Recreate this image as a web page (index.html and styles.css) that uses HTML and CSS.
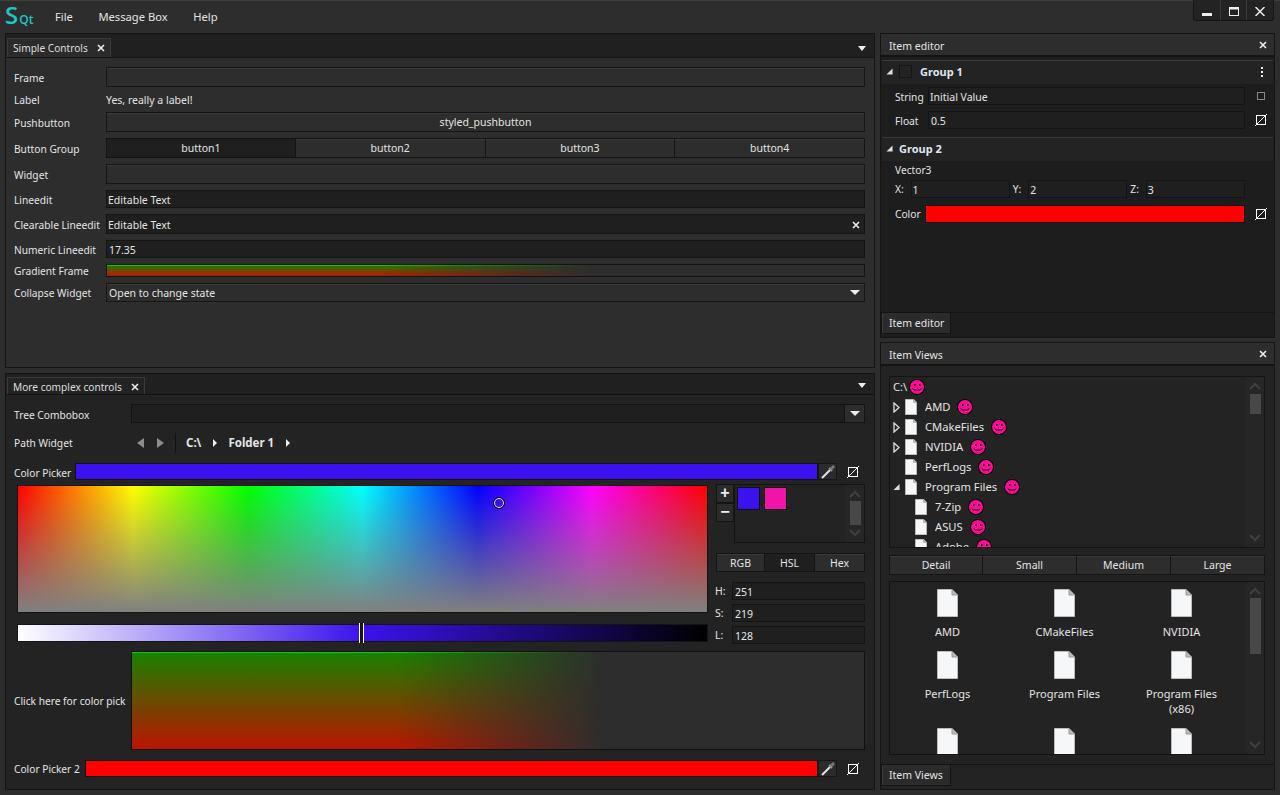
FILE: index.html
```html
<!DOCTYPE html>
<html lang="en">
<head>
<meta charset="utf-8">
<title>SQt</title>
<link rel="stylesheet" href="styles.css">
</head>
<body>
<svg class="defs" width="0" height="0" aria-hidden="true">
  <symbol id="file" viewBox="0 0 21 28"><path d="M0.5 0.5H15L20.5 6V27.5H0.5Z" fill="#f6f7f9" stroke="#bdbdbd"/><path d="M15 0.5V6H20.5" fill="#bbb" stroke="#999"/></symbol>
  <symbol id="smile" viewBox="0 0 16 16"><circle cx="8" cy="8" r="8" fill="#000"/><circle cx="8" cy="8" r="7" fill="#ff0a96"/><rect x="5" y="5" width="1.5" height="2" fill="#000"/><rect x="10" y="5" width="1.5" height="2" fill="#000"/><path d="M4 9.5 5 11H11L12 9.5" fill="none" stroke="#000"/></symbol>
  <symbol id="nocolor" viewBox="0 0 12 12"><rect x="1.5" y="1.5" width="9" height="9" fill="none" stroke="#fff"/><path d="M0 12 12 0" stroke="#fff"/></symbol>
  <symbol id="dropper" viewBox="0 0 16 16"><path d="M2 14 10 6" stroke="#e4e4e4" stroke-width="2"/><path d="M9 4 12 7" stroke="#999" stroke-width="2"/><path d="M11 5 14 2" stroke="#777" stroke-width="3"/></symbol>
  <symbol id="x" viewBox="0 0 8 8"><path d="M1 1 7 7M7 1 1 7" stroke="#eee" stroke-width="1.6"/></symbol>
  <symbol id="up" viewBox="0 0 12 8"><path d="M1 7 6 2 11 7" fill="none" stroke="#404040" stroke-width="2"/></symbol>
  <symbol id="down" viewBox="0 0 12 8"><path d="M1 1 6 6 11 1" fill="none" stroke="#404040" stroke-width="2"/></symbol>
  <symbol id="open" viewBox="0 0 8 8"><path d="M7.5 0.5V7.5H0.5Z" fill="#ddd"/></symbol>
  <symbol id="closed" viewBox="0 0 7 11"><path d="M1 1 6 5.5 1 10Z" fill="none" stroke="#ddd" stroke-width="1.3"/></symbol>
</svg>

<div class="app">
  <header class="titlebar">
    <div class="logo"><span class="logo-s">S</span><span class="logo-qt">Qt</span></div>
    <nav class="menu"><span>File</span><span>Message Box</span><span>Help</span></nav>
    <div class="winbtns">
      <div class="winbtn"><svg width="10" height="3" class="min"><rect width="10" height="3" fill="#eee"/></svg></div>
      <div class="winbtn"><svg width="10" height="9"><rect x="0.5" y="0.5" width="9" height="8" fill="none" stroke="#eee"/><rect width="10" height="2.5" fill="#eee"/></svg></div>
      <div class="winbtn"><svg width="10" height="9" viewBox="0 0 10 9"><path d="M0.5 0 9.5 9M9.5 0 0.5 9" stroke="#eee" stroke-width="1.5"/></svg></div>
    </div>
  </header>

  <main class="main">
    <div class="col-left">
      <section class="panel panel-simple">
        <div class="tabstrip">
          <div class="tab"><span>Simple Controls</span><svg class="tab-x"><use href="#x"/></svg></div>
          <div class="tabmenu"></div>
        </div>
        <div class="form">
          <label>Frame</label><div class="frame h20"></div>
          <label class="lab-flat">Label</label><div class="plain h13">Yes, really a label!</div>
          <label>Pushbutton</label><div class="frame h20 center">styled_pushbutton</div>
          <label class="lab-low">Button Group</label>
          <div class="btngroup h20"><div class="btn on">button1</div><div class="btn">button2</div><div class="btn">button3</div><div class="btn">button4</div></div>
          <label>Widget</label><div class="frame h20"></div>
          <label>Lineedit</label><div class="input h18">Editable Text</div>
          <label>Clearable Lineedit</label><div class="input h20 between"><span>Editable Text</span><svg class="clear"><use href="#x"/></svg></div>
          <label>Numeric Lineedit</label><div class="input h18 num">17.35</div>
          <label class="lab-flat">Gradient Frame</label><div class="gradframe h13"></div>
          <label class="lab-flat">Collapse Widget</label><div class="frame h19 combo"><span>Open to change state</span><i class="caret"></i></div>
        </div>
      </section>

      <section class="panel panel-complex">
        <div class="tabstrip tabstrip2">
          <div class="tab tab2"><span>More complex controls</span><svg class="tab-x"><use href="#x"/></svg></div>
          <div class="tabmenu"></div>
        </div>
        <div class="complex">
          <div class="row tree-row">
            <label class="w117">Tree Combobox</label>
            <div class="input grow h19 treecombo"><div class="combo-drop"><i class="caret"></i></div></div>
          </div>
          <div class="row path-row">
            <label class="w117 lab-flat">Path Widget</label>
            <div class="path">
              <i class="tri-left"></i><i class="tri-right grey"></i><i class="pathsep"></i>
              <b>C:\</b><i class="tri-right small"></i><b class="folder">Folder 1</b><i class="tri-right small"></i>
            </div>
          </div>
          <div class="row cp-row">
            <label class="cp-label">Color Picker</label>
            <div class="swatch blue grow"></div>
            <div class="dropper"><svg width="16" height="16"><use href="#dropper"/></svg></div>
            <svg class="nocolor"><use href="#nocolor"/></svg>
          </div>
          <div class="picker">
            <div class="picker-left">
              <div class="huebox"><i class="ring"></i></div>
              <div class="lumbar"><i class="handle"></i></div>
            </div>
            <div class="picker-right">
              <div class="palette-row">
                <div class="pm"><div class="pm-btn">+</div><div class="pm-btn">−</div></div>
                <div class="palette">
                  <div class="pal-swatch blue"></div>
                  <div class="pal-swatch pink"></div>
                  <div class="scroll"><svg class="sc-arrow"><use href="#up"/></svg><i class="thumb t-pal"></i><svg class="sc-arrow end"><use href="#down"/></svg></div>
                </div>
              </div>
              <div class="modes"><div class="btn">RGB</div><div class="btn on">HSL</div><div class="btn">Hex</div></div>
              <div class="hsl"><span>H:</span><div class="input h18">251</div></div>
              <div class="hsl"><span>S:</span><div class="input h18">219</div></div>
              <div class="hsl"><span>L:</span><div class="input h18">128</div></div>
            </div>
          </div>
          <div class="row big-row">
            <label class="w117 lab-flat">Click here for color pick</label>
            <div class="biggrad grow"></div>
          </div>
          <div class="row cp2-row">
            <label class="cp2-label lab-flat">Color Picker 2</label>
            <div class="swatch red grow"></div>
            <div class="dropper"><svg width="16" height="16"><use href="#dropper"/></svg></div>
            <svg class="nocolor"><use href="#nocolor"/></svg>
          </div>
        </div>
      </section>
    </div>

    <div class="col-right">
      <section class="panel panel-editor">
        <div class="dockhead"><span>Item editor</span><svg class="dock-x"><use href="#x"/></svg></div>
        <div class="editor">
          <div class="grouphead">
            <svg class="gtri"><use href="#open"/></svg><i class="check"></i><b>Group 1</b>
            <div class="dots"><i></i><i></i><i></i></div>
          </div>
          <div class="erow e-string"><label>String</label><div class="input grow h18">Initial Value</div><i class="sq"></i></div>
          <div class="erow e-float"><label>Float</label><div class="input grow h18 num-e">0.5</div><svg class="nocolor2"><use href="#nocolor"/></svg></div>
          <div class="grouphead g2">
            <svg class="gtri"><use href="#open"/></svg><b>Group 2</b>
          </div>
          <div class="vec-title">Vector3</div>
          <div class="erow vec">
            <label>X:</label><div class="input grow h18">1</div>
            <label>Y:</label><div class="input grow h18">2</div>
            <label>Z:</label><div class="input grow h18">3</div>
            <i class="spacer"></i>
          </div>
          <div class="erow e-color"><label class="lab-flat">Color</label><div class="swatch red grow h18"></div><svg class="nocolor2"><use href="#nocolor"/></svg></div>
        </div>
        <div class="btabs"><div class="btab">Item editor</div></div>
      </section>

      <section class="panel panel-views">
        <div class="dockhead"><span>Item Views</span><svg class="dock-x"><use href="#x"/></svg></div>
        <div class="views">
          <div class="tree">
            <div class="tree-list">
              <div class="node root">C:\<svg class="smile s-root"><use href="#smile"/></svg></div>
              <div class="node"><svg class="arrow"><use href="#closed"/></svg><svg class="fi"><use href="#file"/></svg>AMD<svg class="smile"><use href="#smile"/></svg></div>
              <div class="node"><svg class="arrow"><use href="#closed"/></svg><svg class="fi"><use href="#file"/></svg>CMakeFiles<svg class="smile"><use href="#smile"/></svg></div>
              <div class="node"><svg class="arrow"><use href="#closed"/></svg><svg class="fi"><use href="#file"/></svg>NVIDIA<svg class="smile"><use href="#smile"/></svg></div>
              <div class="node"><i class="arrow"></i><svg class="fi"><use href="#file"/></svg>PerfLogs<svg class="smile"><use href="#smile"/></svg></div>
              <div class="node"><svg class="arrow op"><use href="#open"/></svg><svg class="fi"><use href="#file"/></svg>Program Files<svg class="smile"><use href="#smile"/></svg></div>
              <div class="node child"><svg class="fi"><use href="#file"/></svg>7-Zip<svg class="smile"><use href="#smile"/></svg></div>
              <div class="node child"><svg class="fi"><use href="#file"/></svg>ASUS<svg class="smile"><use href="#smile"/></svg></div>
              <div class="node child"><svg class="fi"><use href="#file"/></svg>Adobe<svg class="smile"><use href="#smile"/></svg></div>
            </div>
            <div class="scroll"><svg class="sc-arrow"><use href="#up"/></svg><i class="thumb t-tree"></i><svg class="sc-arrow end"><use href="#down"/></svg></div>
          </div>
          <div class="sizes"><div class="btn">Detail</div><div class="btn">Small</div><div class="btn">Medium</div><div class="btn">Large</div></div>
          <div class="iconlist">
            <div class="icons">
              <div class="ic"><svg class="fi-big"><use href="#file"/></svg><span>AMD</span></div>
              <div class="ic"><svg class="fi-big"><use href="#file"/></svg><span>CMakeFiles</span></div>
              <div class="ic"><svg class="fi-big"><use href="#file"/></svg><span>NVIDIA</span></div>
              <div class="ic"><svg class="fi-big"><use href="#file"/></svg><span>PerfLogs</span></div>
              <div class="ic"><svg class="fi-big"><use href="#file"/></svg><span>Program Files</span></div>
              <div class="ic"><svg class="fi-big"><use href="#file"/></svg><span>Program Files<br>(x86)</span></div>
              <div class="ic"><svg class="fi-big"><use href="#file"/></svg></div>
              <div class="ic"><svg class="fi-big"><use href="#file"/></svg></div>
              <div class="ic"><svg class="fi-big"><use href="#file"/></svg></div>
            </div>
            <div class="scroll"><svg class="sc-arrow"><use href="#up"/></svg><i class="thumb t-icons"></i><svg class="sc-arrow end"><use href="#down"/></svg></div>
          </div>
        </div>
        <div class="btabs btabs2"><div class="btab">Item Views</div></div>
      </section>
    </div>
  </main>
</div>
</body>
</html>
```

FILE: styles.css
```css
* { box-sizing: border-box; }
html, body { margin: 0; height: 100%; }
body {
  background: #2d2d2d;
  color: #e4e4e4;
  font: 10.5px/14px "Noto Sans", "Open Sans", sans-serif;
  overflow: hidden;
}
.defs { position: absolute; }
label { white-space: nowrap; font-size: 10.2px; padding-top: 2px; }
.lab-flat { padding-top: 0; }
i { display: block; }
.app { width: 1280px; height: 795px; display: flex; flex-direction: column; border-top: 1px solid #3e3e3e; }

/* title bar */
.titlebar { height: 32px; display: flex; align-items: flex-start; flex: none; position: relative; }
.logo { width: 55px; padding: 2px 0 0 5px; color: #1fc6c6; display: flex; align-items: flex-end; height: 26px; }
.logo-s { font: 600 24px/24px "Open Sans", sans-serif; }
.logo-qt { font: 600 12px/15px "Open Sans", sans-serif; margin-left: 1px; }
.menu { display: flex; gap: 25.5px; font-size: 11.2px; line-height: 16px; padding-top: 8px; }
.winbtns { position: absolute; right: 6px; top: -1px; height: 21px; width: 81px; display: flex; background: #232323; border: 1px solid #151515; border-top: 0; border-radius: 0 0 3px 3px; }
.winbtn { flex: 1; display: flex; align-items: center; justify-content: center; border-left: 1px solid #3a3a3a; padding-top: 2px; }
.winbtn:first-child { border-left: 0; }
.winbtn .min { margin-top: 6px; }

.main { flex: 1; display: flex; gap: 5px; padding: 0 5px 5px; background: #2d2d2d; min-height: 0; }
.col-left { width: 870px; display: flex; flex-direction: column; gap: 5px; }
.col-right { width: 395px; display: flex; flex-direction: column; gap: 4px; }
.panel { border: 1px solid #141414; display: flex; flex-direction: column; min-height: 0; }
.panel-simple { height: 335px; background: #2d2d2d; }
.panel-complex { flex: 1; background: #232323; }
.panel-editor { height: 305px; background: #1d1d1d; }
.panel-views { flex: 1; background: #232323; }

/* tab strip */
.tabstrip { height: 24px; background: #202020; display: flex; align-items: flex-end; padding-left: 1px; border-bottom: 1px solid #141414; flex: none; position: relative; }
.tabstrip2 { height: 21px; }
.tab { height: 19px; width: 104px; background: #2b2b2b; border: 1px solid #3a3a3a; border-bottom: 0; display: flex; align-items: center; justify-content: space-between; padding: 0 5px; color: #ddd; font-size: 10.15px; }
.tab2 { width: 138px; height: 17px; background: #232323; padding-top: 2px; }
.tab-x { width: 8px; height: 8px; }
.tabmenu { margin-left: auto; margin-right: 8px; margin-bottom: 6px; width: 0; height: 0; border: 4px solid transparent; border-top: 5px solid #eee; border-bottom: 0; }

/* form */
.form { display: grid; grid-template-columns: 92px 1fr; grid-template-rows: 20px 13px 20px 20px 20px 18px 20px 18px 13px 19px; row-gap: 6px; padding: 9px 9px 0 8px; align-items: center; }
.h13 { height: 13px; } .h18 { height: 18px; } .h19 { height: 19px; } .h20 { height: 20px; }
.frame { background: #2d2d2d; border: 1px solid #161616; border-top-color: #131313; box-shadow: inset 0 1px 0 #3a3a3a; display: flex; align-items: center; }
.center { justify-content: center; }
.plain { display: flex; align-items: center; }
.input { background: #1f1f1f; border: 1px solid #141414; display: flex; align-items: center; padding: 1px 0 0 1px; }
.between { justify-content: space-between; padding-right: 4px; }
.num { padding-left: 2px; }
.num-e { padding-left: 2px; }
.clear { width: 8px; height: 8px; }
.gradframe {
  border: 1px solid #141414;
  background:
    linear-gradient(to right, rgba(45,45,45,0) 36%, #2d2d2d 64%),
    linear-gradient(#12c800, #12c800) top / 100% 1px no-repeat,
    linear-gradient(#198200, #bb1400);
}
.combo { justify-content: space-between; padding: 0 3px 0 2px; }
.caret { width: 0; height: 0; border: 5px solid transparent; border-top: 5px solid #eee; border-bottom: 0; margin-right: 1px; }
.btngroup { display: grid; grid-template-columns: repeat(4, 1fr); }
.btn { background: #2d2d2d; border: 1px solid #141414; border-left-width: 0; box-shadow: inset 0 1px 0 #3a3a3a; display: flex; align-items: center; justify-content: center; }
.btn:first-child { border-left-width: 1px; }
.btn.on { background: #1f1f1f; box-shadow: none; }

/* complex */
.complex { padding: 9px 9px 0 8px; display: flex; flex-direction: column; }
.row { display: flex; align-items: center; flex: none; }
.grow { flex: 1; min-width: 0; }
.w117 { width: 117px; flex: none; }
.tree-row { height: 19px; }
.treecombo { height: 19px; justify-content: flex-end; padding: 0; }
.combo-drop { width: 20px; height: 17px; background: #2d2d2d; border-left: 1px solid #141414; display: flex; align-items: center; justify-content: center; }
.combo-drop .caret { margin: 0; }
.path-row { height: 20px; margin-top: 10px; }
.path { display: flex; align-items: center; padding-left: 6px; font-size: 11.5px; }
.tri-left { width: 0; height: 0; border: 5px solid transparent; border-right: 7px solid #8d8d8d; border-left: 0; }
.tri-right { width: 0; height: 0; border: 5px solid transparent; border-left: 7px solid #8d8d8d; border-right: 0; }
.tri-right.grey { margin-left: 13px; }
.tri-right.small { border-width: 4px 0 4px 4px; border-left-color: #eee; margin-left: 12px; }
.pathsep { width: 1px; height: 20px; background: #111; margin: 0 10px 0 11px; }
.path b + .tri-right { margin-left: 12px; }
.folder { margin-left: 11px; }
.cp-row { height: 17px; margin-top: 10px; }
.cp-label { width: 61px; flex: none; }
.cp2-label { width: 71px; flex: none; }
.swatch { height: 100%; border: 1px solid #111; }
.blue { background: #3b12ed; }
.red { background: #ff0000; }
.pink { background: #f014a8; }
.dropper { width: 19px; height: 100%; background: #2b2b2b; border: 1px solid #161616; display: flex; align-items: center; justify-content: center; flex: none; }
.nocolor { width: 12px; height: 12px; margin: 0 6px 0 10px; flex: none; }
.picker { display: flex; margin: 4px 0 0 3px; height: 160px; flex: none; }
.picker-left { width: 691px; flex: none; display: flex; flex-direction: column; padding-top: 1px; }
.huebox {
  position: relative; height: 128px; border: 1px solid #141414; flex: none;
  background:
    linear-gradient(to bottom, rgba(128,128,128,0) 0%, rgba(128,128,128,1) 100%),
    linear-gradient(to right, #ff0000 0%, #ffff00 16.67%, #00ff00 33.33%, #00ffff 50%, #0000ff 66.67%, #ff00ff 83.33%, #ff0000 100%);
}
.ring { position: absolute; left: 475px; top: 11px; width: 12px; height: 12px; border-radius: 50%; border: 1px solid #000; box-shadow: inset 0 0 0 1px #fff; }
.lumbar { position: relative; height: 18px; margin-top: 11px; border: 1px solid #141414; flex: none; background: linear-gradient(to right, #fff 0%, #3b12ed 50%, #000 100%); }
.handle { position: absolute; left: 341px; top: -2px; width: 5px; height: 20px; background: #151515; border-left: 1px solid #fff; border-right: 1px solid #fff; }
.picker-right { width: 151px; margin-left: 6px; display: flex; flex-direction: column; }
.palette-row { display: flex; height: 59px; margin-left: 2px; flex: none; }
.pm { width: 18px; flex: none; }
.pm-btn { height: 19px; background: #2b2b2b; border: 1px solid #141414; text-align: center; font: bold 16px/16px "Liberation Sans", sans-serif; color: #eee; }
.palette { flex: 1; position: relative; background: #232323; border: 1px solid #141414; display: flex; gap: 4px; padding: 2px; }
.pal-swatch { width: 23px; height: 23px; border: 1px solid #111; }
.scroll { position: absolute; right: 0; top: 0; bottom: 0; width: 18px; background: #262626; display: flex; flex-direction: column; align-items: center; padding: 5px 0; }
.sc-arrow { width: 12px; height: 8px; flex: none; }
.sc-arrow.end { margin-top: auto; }
.thumb { width: 11px; background: #484848; flex: none; }
.t-pal { height: 24px; margin-top: 3px; }
.modes { display: grid; grid-template-columns: 49px 50px 50px; height: 19px; margin: 10px 0 0 2px; flex: none; }
.modes .btn { height: 19px; }
.hsl { display: flex; align-items: center; justify-content: space-between; margin-top: 4px; padding-left: 1px; flex: none; }
.modes + .hsl { margin-top: 10px; }
.hsl .input { width: 133px; padding-left: 2px; }
.big-row { height: 99px; margin-top: 7px; }
.biggrad {
  height: 100%; border: 1px solid #111;
  background:
    linear-gradient(to right, rgba(45,45,45,0) 36%, #2d2d2d 64.5%),
    linear-gradient(#12c800, #12c800) top / 100% 1px no-repeat,
    linear-gradient(#198200, #bb1400);
}
.cp2-row { height: 17px; margin-top: 10px; }

/* right docks */
.dockhead { height: 23px; background: #2d2d2d; border-bottom: 2px solid #141414; display: flex; align-items: center; justify-content: space-between; padding: 3px 7px 0 8px; flex: none; }
.dock-x { width: 8px; height: 8px; margin-top: -2px; }
.editor { flex: 1; padding: 3px 1px 0 1px; min-height: 0; }
.grouphead { height: 24px; background: #232323; border-top: 1px solid #3a3a3a; display: flex; align-items: center; padding: 0 0 2px 4px; position: relative; }
.grouphead b { font-size: 11px; color: #dfe6ef; }
.gtri { width: 7px; height: 7px; margin-right: 6px; }
.check { width: 13px; height: 13px; background: #242424; border: 1px solid #161616; margin-right: 8px; }
.dots { margin-left: auto; margin-right: 10px; display: flex; flex-direction: column; gap: 2px; }
.dots i { width: 2px; height: 2px; background: #eee; }
.g2 { margin-top: 8px; }
.erow { display: flex; align-items: center; padding-left: 13px; height: 18px; }
.e-string { margin-top: 3px; }
.e-string label, .e-float label { width: 33px; flex: none; }
.e-float { margin-top: 6px; }
.sq { width: 8px; height: 8px; border: 1px solid #8a8a8a; margin: 0 8px 0 12px; flex: none; }
.nocolor2 { width: 12px; height: 12px; margin: 0 6px 0 10px; flex: none; }
.vec-title { padding-left: 13px; height: 19px; line-height: 19px; font-size: 10.2px; }
.vec { gap: 3px; }
.vec label { width: 12.5px; flex: none; padding-top: 0; }
.spacer { width: 25px; flex: none; }
.e-color { margin-top: 7px; }
.e-color label { width: 30px; flex: none; }
.btabs { height: 25px; border-top: 1px solid #141414; background: #1d1d1d; flex: none; }
.btab { width: 70px; height: 21px; background: #2b2b2b; border: 1px solid #141414; border-top: 0; box-shadow: inset 1px 0 0 #3a3a3a; display: flex; align-items: center; padding-left: 7px; }
.views { flex: 1; padding: 10px 9px 0 8px; min-height: 0; display: flex; flex-direction: column; }
.btabs2 { background: #232323; }
.tree { height: 172px; position: relative; background: #232323; border: 1px solid #141414; overflow: hidden; flex: none; }
.node { height: 20px; display: flex; align-items: center; font-size: 11.2px; white-space: nowrap; }
.root { padding-left: 3px; }
.arrow { width: 7px; height: 11px; margin: 0 5px 0 3px; flex: none; }
.op { height: 8px; }
.child { padding-left: 25px; }
.fi { width: 12px; height: 16px; margin-right: 8px; flex: none; }
.smile { width: 16px; height: 16px; margin-left: 7px; flex: none; }
.s-root { margin-left: 2px; }
.t-tree { height: 20px; margin-top: 4px; }
.sizes { display: grid; grid-template-columns: repeat(4, 1fr); height: 20px; margin-top: 7px; flex: none; }
.iconlist { height: 174px; margin-top: 6px; position: relative; background: #232323; border: 1px solid #141414; overflow: hidden; flex: none; }
.icons { display: grid; grid-template-columns: repeat(3, 117px); align-content: start; margin-left: -1px; }
.ic { display: flex; flex-direction: column; align-items: center; padding: 7px 0 5px; text-align: center; line-height: 15px; font-size: 11px; }
.fi-big { width: 21px; height: 28px; margin-bottom: 7px; flex: none; }
.t-icons { height: 56px; margin-top: 3px; }
```
